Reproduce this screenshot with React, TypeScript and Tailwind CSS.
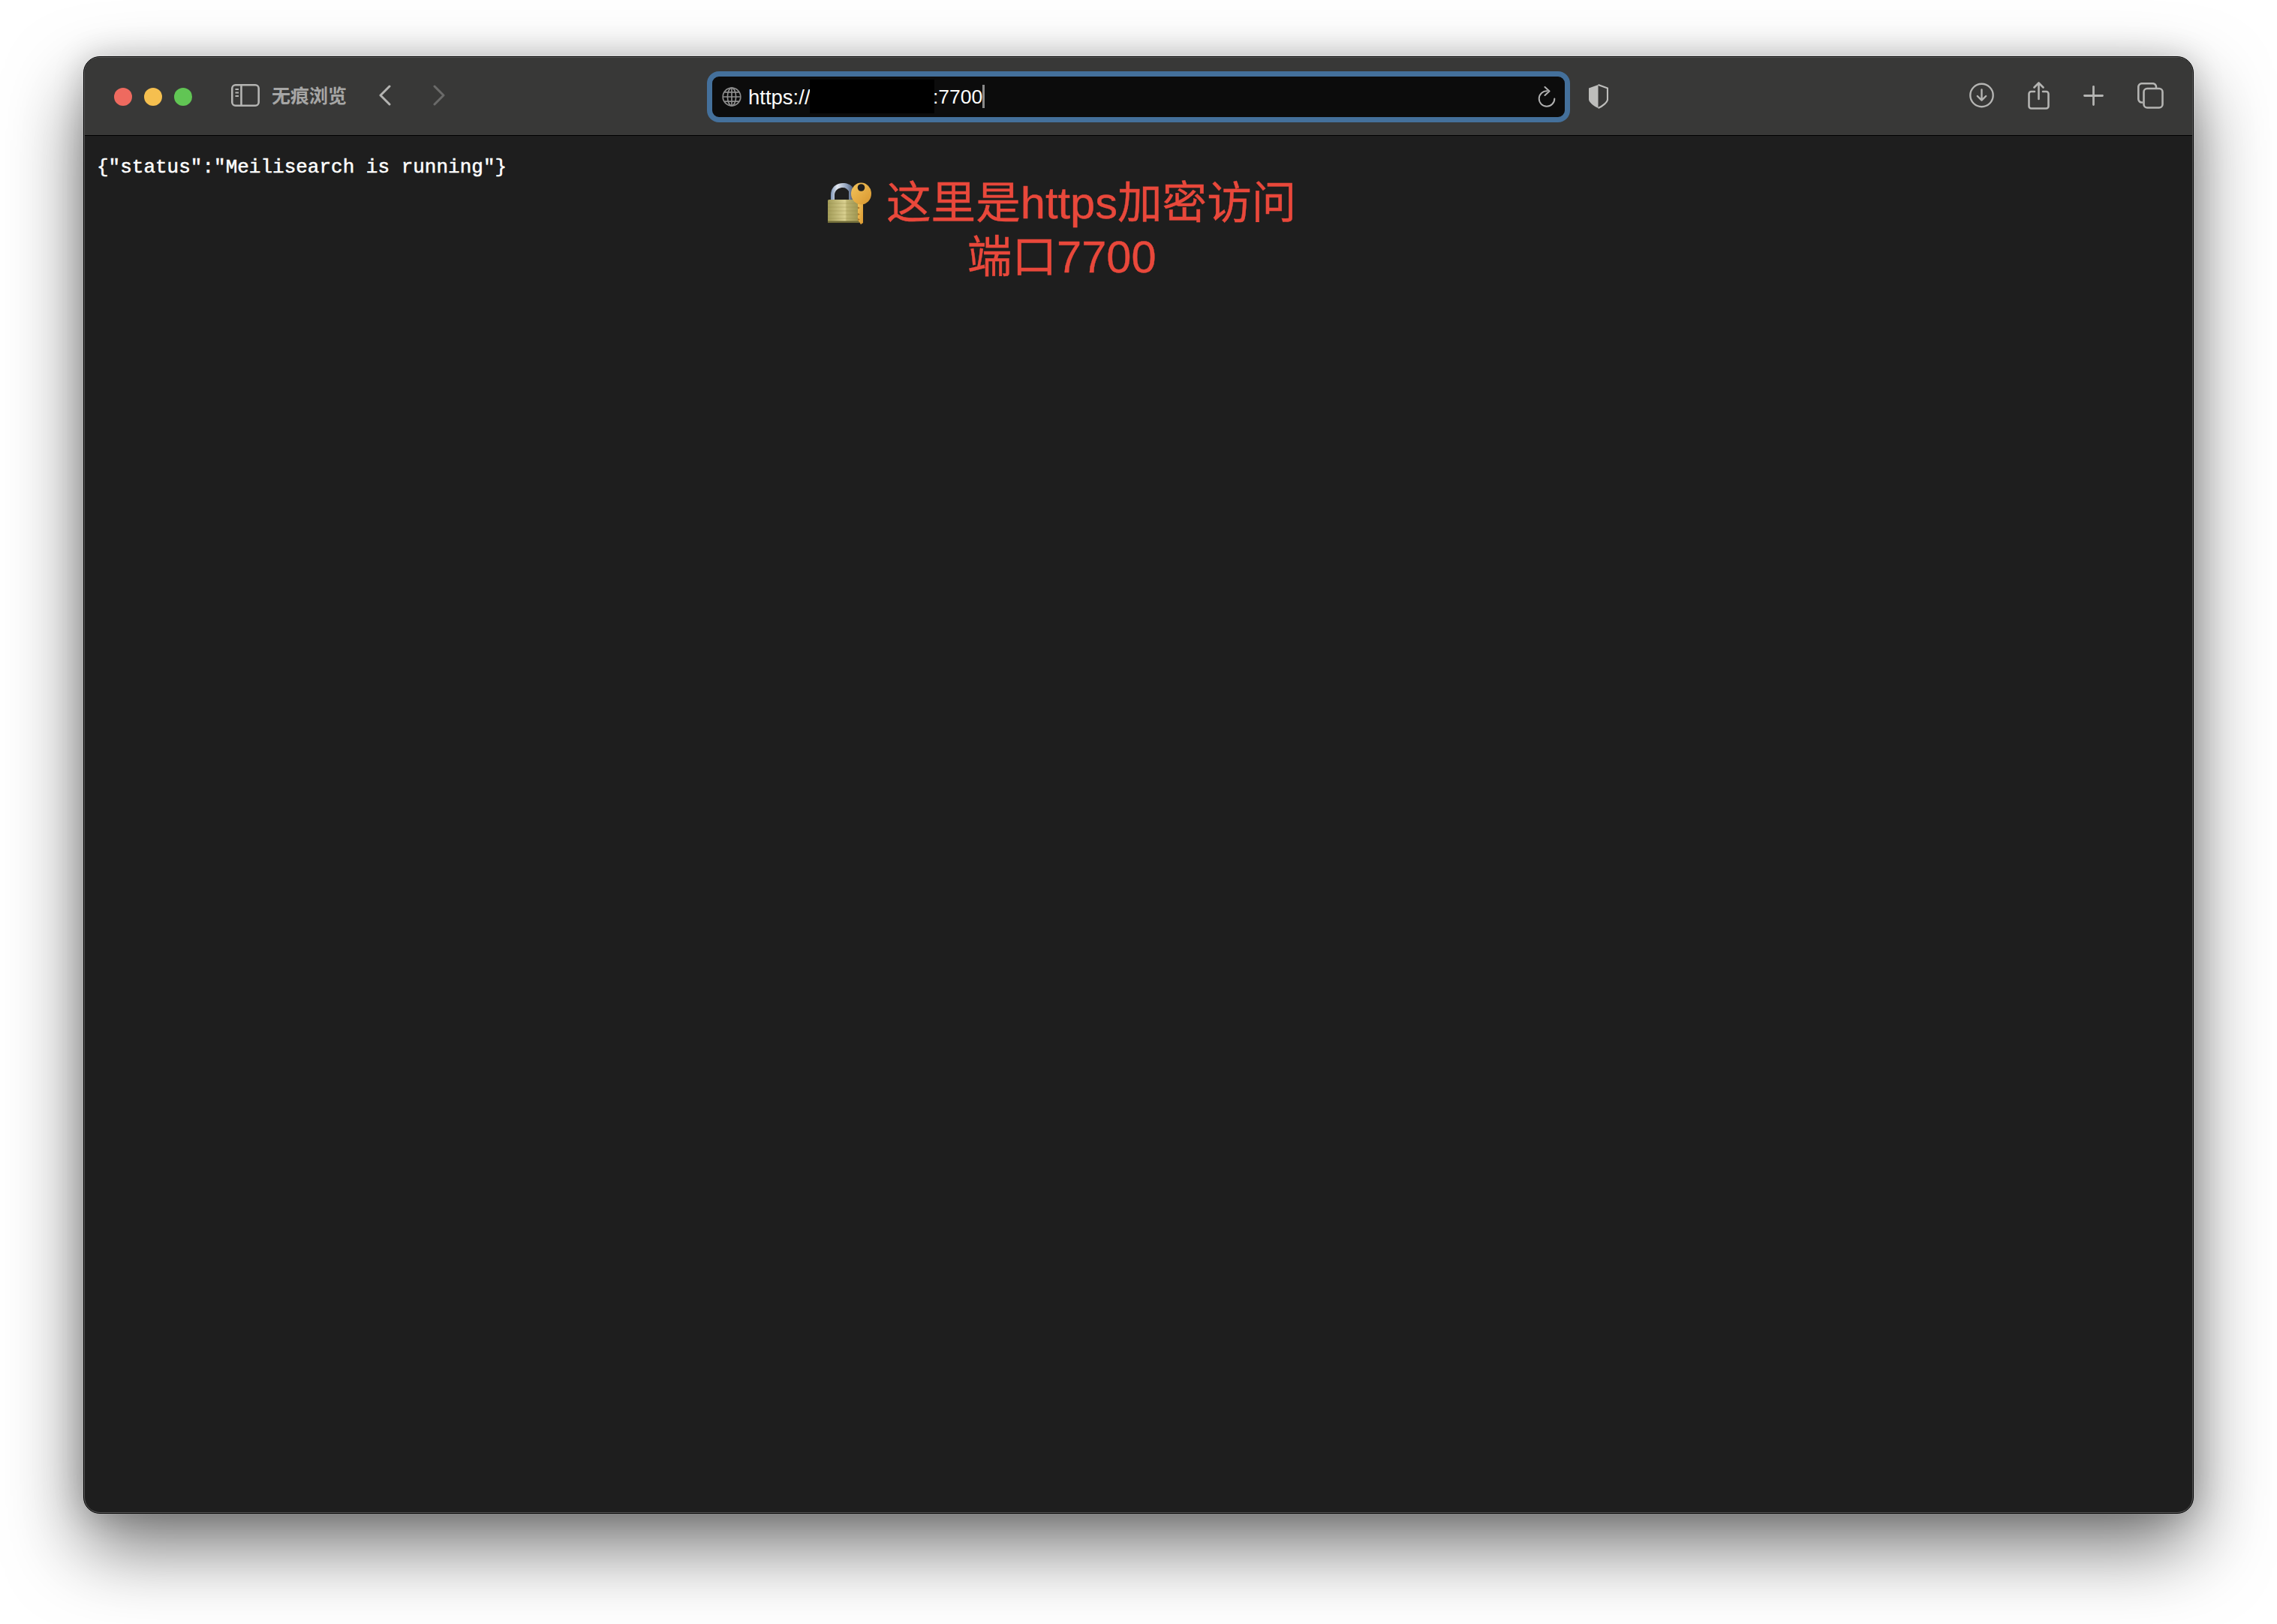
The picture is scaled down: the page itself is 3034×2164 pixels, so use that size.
const iconColor = "#b4b4b2";

function SidebarIcon() {
  return (
    <svg width="38" height="30" viewBox="0 0 38 30" fill="none" stroke={iconColor} strokeWidth="2.6">
      <rect x="1.3" y="1.3" width="35.4" height="27.4" rx="4.5" />
      <path d="M13.5 1.3v27.4" />
      <path d="M5.5 7h4.5M5.500 11.500h4.500M5.500 16h4.500" strokeWidth="2" />
    </svg>
  );
}

function Chevron({ flip, color }: { flip?: boolean; color: string }) {
  return (
    <svg width="16" height="28" viewBox="0 0 16 28" fill="none" stroke={color} strokeWidth="3" strokeLinecap="round" strokeLinejoin="round">
      <path d={flip ? "M2 2l12 12L2 26" : "M14 2L2 14l12 12"} />
    </svg>
  );
}

function GlobeIcon() {
  return (
    <svg width="26" height="26" viewBox="0 0 26 26" fill="none" stroke="#8d8d8d" strokeWidth="1.7">
      <circle cx="13" cy="13" r="11.8" />
      <ellipse cx="13" cy="13" rx="5.6" ry="11.8" />
      <path d="M13 1.2v23.6M1.2 13h23.6M3.2 6.8h19.6M3.2 19.2h19.6" />
    </svg>
  );
}

function ReloadIcon() {
  return (
    <svg width="24" height="28" viewBox="0 0 24 28" fill="none" stroke="#b0b0b0" strokeWidth="2" strokeLinecap="round" strokeLinejoin="round">
      <path d="M12.5 6.2A10.3 10.3 0 1 0 22.3 16.5" />
      <path d="M9.5 1l6 5.5-6 5.5" />
    </svg>
  );
}

function ShieldIcon() {
  return (
    <svg width="27" height="33" viewBox="0 0 27 33" fill="none">
      <path d="M13.5 1L1 5.5v15c0 3.5 6.5 9 12.5 11.5V1z" fill="#bdbdbb" />
      <path d="M13.5 1L26 5.5v15c0 3.5-6.5 9-12.5 11.5" stroke="#bdbdbb" strokeWidth="2.2" strokeLinejoin="round" />
    </svg>
  );
}

function DownloadIcon() {
  return (
    <svg width="33" height="34" viewBox="0 0 33 34" fill="none" stroke={iconColor} strokeWidth="2.4" strokeLinecap="round" strokeLinejoin="round">
      <circle cx="16.5" cy="17" r="15.2" />
      <path d="M16.5 9.5v14M10.8 18l5.7 5.7 5.7-5.7" />
    </svg>
  );
}

function ShareIcon() {
  return (
    <svg width="29" height="37" viewBox="0 0 29 37" fill="none" stroke={iconColor} strokeWidth="2.6" strokeLinecap="round" strokeLinejoin="round">
      <path d="M9 13H4.5a3 3 0 0 0-3 3v16.5a3 3 0 0 0 3 3h20a3 3 0 0 0 3-3V16a3 3 0 0 0-3-3H20" />
      <path d="M14.5 23V2M8.5 7.5l6-6 6 6" />
    </svg>
  );
}

function PlusIcon() {
  return (
    <svg width="27" height="27" viewBox="0 0 27 27" fill="none" stroke={iconColor} strokeWidth="2.8" strokeLinecap="round">
      <path d="M13.5 1.5v24M1.5 13.5h24" />
    </svg>
  );
}

function TabsIcon() {
  return (
    <svg width="35" height="35" viewBox="0 0 35 35" fill="none" stroke={iconColor} strokeWidth="2.6" strokeLinejoin="round">
      <path d="M7 26.5H6a4.5 4.5 0 0 1-4.7-4.5V6A4.5 4.5 0 0 1 6 1.3h14A4.5 4.5 0 0 1 25 6v1" />
      <rect x="8.5" y="8" width="25" height="25.5" rx="4.5" />
    </svg>
  );
}

function LockKeyEmoji() {
  return (
    <svg width="60" height="58" viewBox="0 0 60 58" className="shrink-0">
      <defs>
        <linearGradient id="shackle" x1="0" y1="0" x2="1" y2="0">
          <stop offset="0" stopColor="#7f95b5" />
          <stop offset="0.3" stopColor="#e4e9f1" />
          <stop offset="0.75" stopColor="#8a9cb8" />
          <stop offset="1" stopColor="#4f5f7a" />
        </linearGradient>
        <linearGradient id="lockbody" x1="0" y1="0" x2="1" y2="0">
          <stop offset="0" stopColor="#a39c58" />
          <stop offset="0.55" stopColor="#d9d090" />
          <stop offset="0.6" stopColor="#bdb471" />
          <stop offset="1" stopColor="#9c9450" />
        </linearGradient>
        <linearGradient id="keygold" x1="0" y1="0" x2="1" y2="1">
          <stop offset="0" stopColor="#f3c45c" />
          <stop offset="1" stopColor="#d8962e" />
        </linearGradient>
      </defs>
      <path d="M5 26V18C5 7 13 2 21 2c6 0 10 2 13 5v19h-5V13c-2-3-4-5-8-5-6 0-11 4-11 10v8z" fill="url(#shackle)" />
      <rect x="1" y="24" width="42" height="31" rx="1.5" fill="url(#lockbody)" />
      <path d="M1 29h42M1 34h42M1 39h42M1 44h42M1 49h42" stroke="#8f8846" strokeOpacity="0.35" strokeWidth="1" />
      <rect x="1" y="52.500" width="42" height="2.500" fill="#6f6a38" />
      <path d="M41 27v24l4 6 3-2V27z" fill="url(#keygold)" />
      <path d="M41 33.500l3 1.500-3 1.500zM41 42l3 1.500-3 1.500zM41 49l3 1.500-3 1.500z" fill="#a9762a" />
      <ellipse cx="45.500" cy="16" rx="13.500" ry="14.500" fill="url(#keygold)" />
      <circle cx="45.500" cy="8" r="4.800" fill="#1e1e1e" />
    </svg>
  );
}

export default function App() {
  return (
    <div className="w-[3034px] h-[2164px] bg-white pt-[75px] pl-[111px] font-['Liberation_Sans','Noto_Sans_CJK_SC',sans-serif]">
      <div className="relative w-[2812px] h-[1942px] rounded-[22px] border border-black bg-[#1e1e1e] shadow-[0_44px_100px_rgba(0,0,0,0.55),0_0_40px_rgba(0,0,0,0.18)]">
        <div className="h-full overflow-hidden rounded-[21px] border border-[#595959]">
          <div className="flex h-[104px] items-center border-b border-black bg-[#383837] pl-[39px] pr-[38px]">
            <div className="flex gap-4">
              <div className="h-6 w-6 rounded-full bg-[#ee6a5f]" />
              <div className="h-6 w-6 rounded-full bg-[#f5bf4f]" />
              <div className="h-6 w-6 rounded-full bg-[#61c554]" />
            </div>
            <div className="ml-[52px] -mt-[3px]">
              <SidebarIcon />
            </div>
            <div className="ml-4 w-[100px] whitespace-nowrap text-[25px] font-semibold leading-none text-[#a6a6a5]">无痕浏览</div>
            <div className="ml-[43px] -mt-[3px]">
              <Chevron color="#b4b4b2" />
            </div>
            <div className="ml-14 -mt-[3px]">
              <Chevron flip color="#6a6a69" />
            </div>
            <div className="ml-[349px] flex h-[68px] w-[1150px] items-center rounded-[16px] border-[7px] border-[#44709b] bg-[#0c0c0c] pl-[13px] pr-3">
              <GlobeIcon />
              <div className="ml-[9px] w-[82px] overflow-hidden whitespace-nowrap pt-[2px] text-[27.5px] text-white">https://</div>
              <div className="h-[45px] w-[166px] bg-black" />
              <div className="-ml-[2px] pt-[2px] text-[26.5px] leading-none text-white">:7700</div>
              <div className="h-[31px] w-[3px] bg-[#8a8a8a]" />
              <div className="ml-auto">
                <ReloadIcon />
              </div>
            </div>
            <div className="ml-6 -mt-[1px]">
              <ShieldIcon />
            </div>
            <div className="ml-auto -mt-[3px] flex items-center gap-[45px]">
              <DownloadIcon />
              <ShareIcon />
              <PlusIcon />
              <TabsIcon />
            </div>
          </div>
          <pre className="pl-[16px] pt-[27px] font-['Liberation_Mono',monospace] text-[26px] leading-[30px] text-white [-webkit-text-stroke:0.5px_white]">
            {'{"status":"Meilisearch is running"}'}
          </pre>
        </div>
        <div className="absolute left-[990px] top-[159px] flex flex-col items-center text-[59.6px] leading-[72px] text-[#e9483b] [-webkit-text-stroke:0.4px_#e9483b]">
          <div className="flex items-center whitespace-nowrap">
            <LockKeyEmoji />
            <span className="ml-[19px]">这里是https加密访问</span>
          </div>
          <div className="whitespace-nowrap">端口7700</div>
        </div>
      </div>
    </div>
  );
}
